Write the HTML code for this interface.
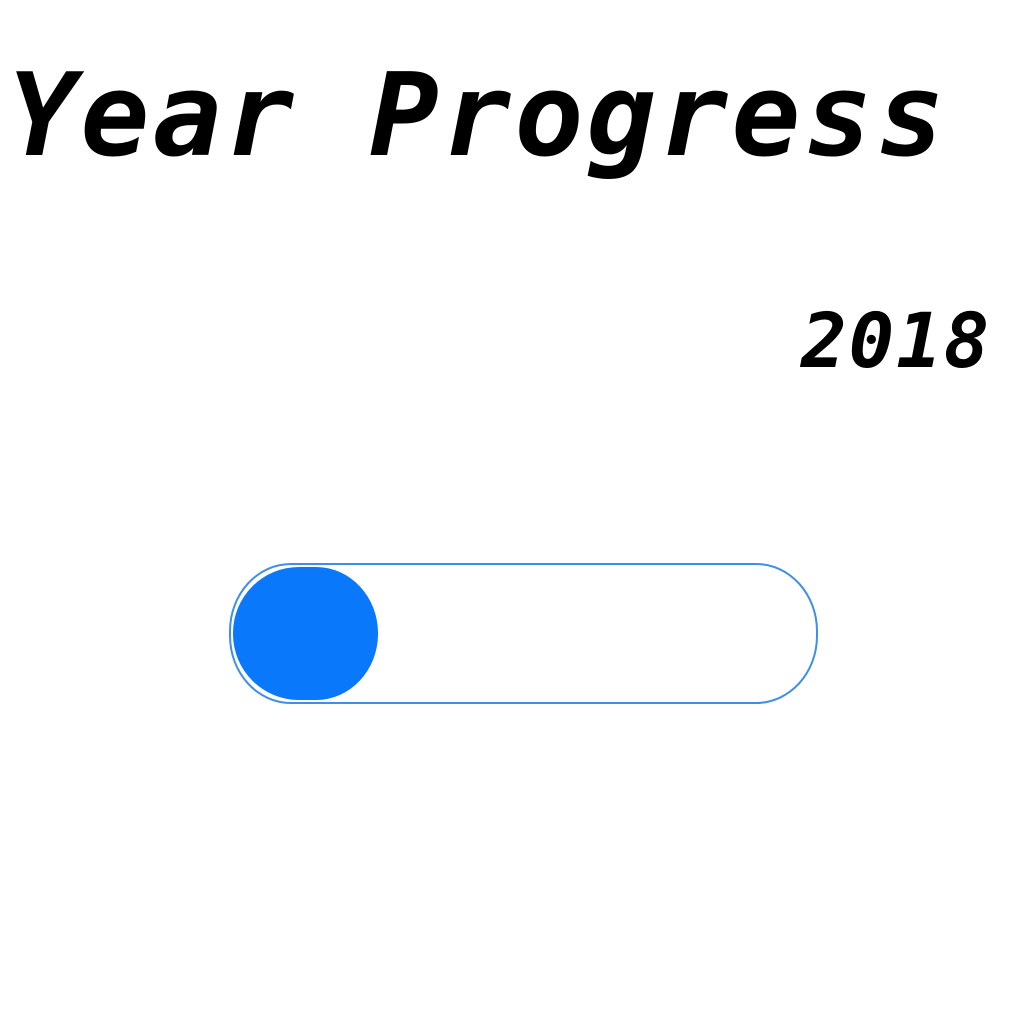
<!DOCTYPE html>
<html><head><style>
html,body{margin:0;padding:0;background:#fff;width:1024px;height:1024px;overflow:hidden;position:relative}
.t{position:absolute;font-family:"DejaVu Sans Mono","Liberation Mono",monospace;font-weight:bold;font-style:oblique;color:#000;white-space:pre;line-height:1}
#a{left:8px;top:59px;font-size:115px;letter-spacing:3.1px}
#b{left:801px;top:303px;font-size:76px;letter-spacing:1.8px}
#bar{position:absolute;left:229px;top:563px;width:585px;height:137px;border:2px solid #3f8fe8;border-radius:62px/68px}
#fill{position:absolute;left:233px;top:567px;width:145px;height:133px;background:#0a78fb;border-radius:66px 62px 62px 66px/66px 66px 66px 66px}
</style></head><body>
<div class="t" id="a">Year Progress</div>
<div class="t" id="b">2018</div>
<div id="bar"></div>
<div id="fill"></div>
</body></html>
